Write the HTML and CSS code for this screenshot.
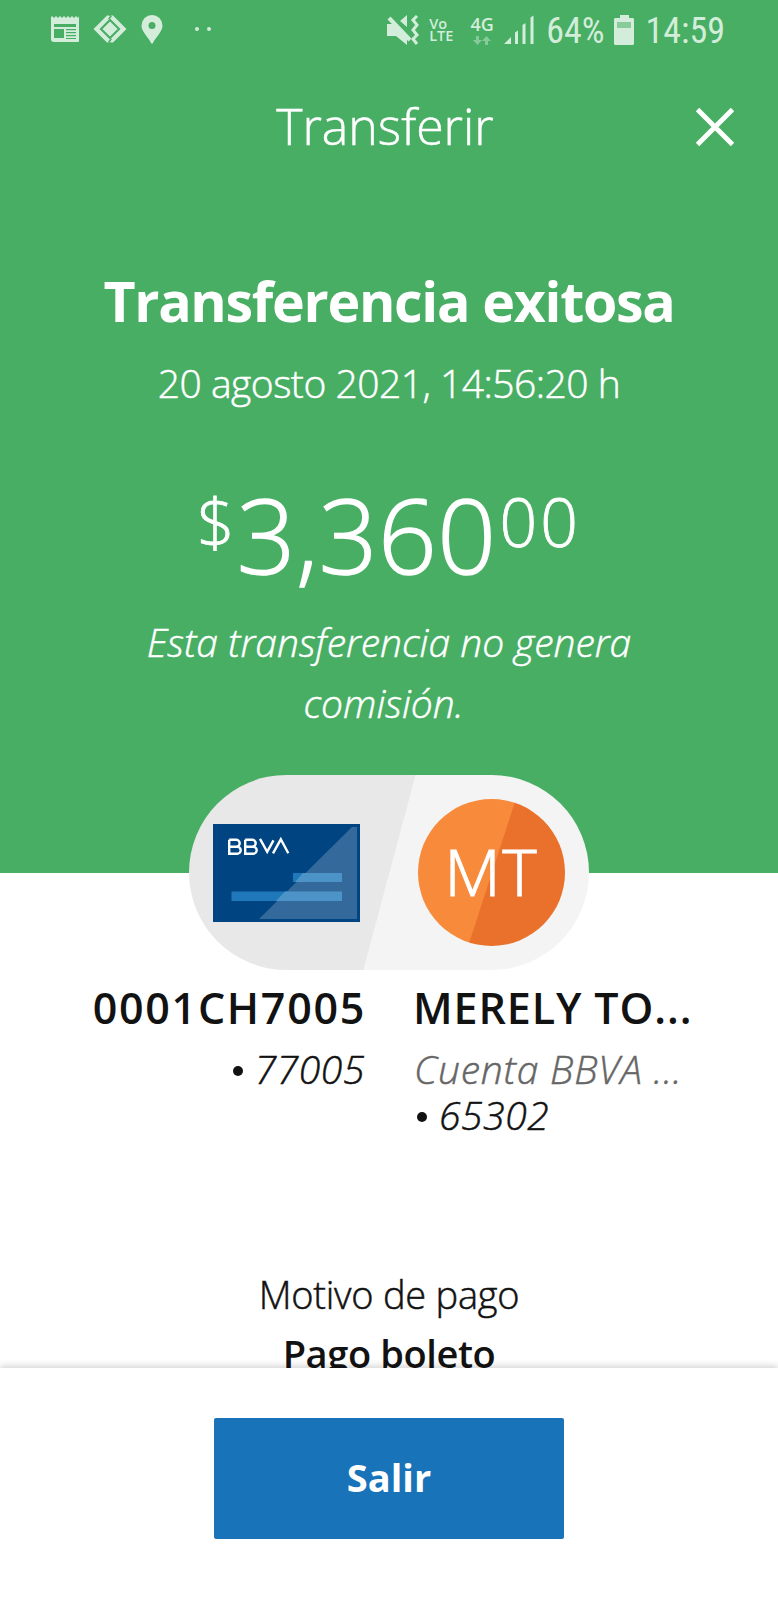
FILE: index.html
```
<!DOCTYPE html>
<html lang="es">
<head>
    <meta charset="UTF-8">
    <meta name="viewport" content="width=device-width, initial-scale=1.0">
    <title>Transferir</title>
    <link rel="stylesheet" href="styles.css">
</head>
<body>
    <div class="screen">
        <header class="hero">
            <div class="status-bar">
                <div class="status-left">
                    <svg width="28" height="28" viewBox="0 0 28 28">
                        <path fill="currentColor" fill-rule="evenodd" d="M0 2l1-1 2 2 2-2 2 2 2-2 2 2 2-2 2 2 2-2 2 2 2-2 2 2 2-2 2 2 1-2 1 1v22q0 3-3 3H3q-3 0-3-3zM3 9v3h22V9zM3 14v9h10v-9zM15 14v1.3h10V14zM15 17v1.3h10V17zM15 20v1.3h10V20zM15 23v1h10v-1z"/>
                    </svg>
                    <svg width="34" height="28" viewBox="0 0 34 28">
                        <path fill="currentColor" d="M14 .5h2l2 2L6.500 14 18 25.500l-2 2h-2L.5 14zM20 .5h-2l-2 2L27.500 14 16 25.500l2 2h2L33.500 14z"/>
                        <path fill="currentColor" stroke="#48ae64" stroke-width="1.300" d="M17 5.500l8.500 8.500-8.500 8.500L8.500 14z"/>
                        <path fill="none" stroke="#48ae64" stroke-width="1.300" d="M18.500 1L15.500 4M15.500 27L18.500 24"/>
                    </svg>
                    <svg width="22" height="29" viewBox="0 0 22 29">
                        <path fill="currentColor" fill-rule="evenodd" d="M11 0a10.500 10.500 0 0 1 10.500 10.500C21.500 17 14 23 12 28q-1 1.500-2 0C8 23 .5 17 .5 10.500A10.500 10.500 0 0 1 11 0zM11 7a3.500 3.500 0 1 0 0 7 3.500 3.500 0 0 0 0-7z"/>
                    </svg>
                    <svg class="more" width="18" height="6" viewBox="0 0 18 6">
                        <circle fill="currentColor" cx="3" cy="3" r="2"/>
                        <circle fill="currentColor" cx="15" cy="3" r="2"/>
                    </svg>
                </div>
                <div class="status-right">
                    <svg width="33" height="30" viewBox="0 0 33 30">
                        <path fill="currentColor" d="M0 9h8L20 20v10l-11-9H0zM13 6l7-6v12z"/>
                        <path stroke="#48ae64" stroke-width="2" d="M5 1l21 23"/>
                        <path stroke="currentColor" stroke-width="4" d="M2 3l21 22"/>
                        <path fill="none" stroke="currentColor" stroke-width="3" d="M30 1l-4 4 4 5-4 5 4 5-4 4 4 5"/>
                    </svg>
                    <div class="volte"><span>Vo</span><span>LTE</span></div>
                    <div class="network">
                        <span>4G</span>
                        <svg width="18" height="9" viewBox="0 0 18 9">
                            <path fill="currentColor" d="M3 0h3v4h3L4.500 9 0 4h3zM12 9h3V5h3l-4.500-5L9 5h3z"/>
                        </svg>
                    </div>
                    <svg class="signal" width="30" height="30" viewBox="0 0 30 30">
                        <path fill="currentColor" d="M0 29l7-7v7zM11 29V17.500l3-2V29zM18.500 29V10l3-2v21zM26.500 29V2.500l3-2V29z"/>
                    </svg>
                    <span class="battery-level">64%</span>
                    <svg class="battery" width="20" height="30" viewBox="0 0 20 30">
                        <path fill="currentColor" d="M6 0h9v3h4l1 1v25l-1 1H1l-1-1V4l1-1h5z"/>
                        <path fill="#8acb9b" d="M3 7h14v6H3z"/>
                    </svg>
                    <span class="clock">14:59</span>
                </div>
            </div>

            <div class="app-bar">
                <span class="app-title">Transferir</span>
                <svg class="close" width="40" height="40" viewBox="0 0 40 40">
                    <path fill="none" stroke="#fff" stroke-width="4.800" d="M2.500 2.500l35 35M37.500 2.500l-35 35"/>
                </svg>
            </div>

            <h1>Transferencia exitosa</h1>
            <p class="date">20 agosto 2021, 14:56:20 h</p>
            <div class="amount">
                <span class="currency">$</span><span class="units">3,360</span><span class="cents">00</span>
            </div>
            <p class="fee">Esta transferencia no genera <span class="last-word">comisión.</span></p>
        </header>

        <main class="details">
            <div class="pill">
                <svg class="card" width="147" height="98" viewBox="0 0 147 98">
                    <path fill="#004481" d="M0 0h147v98H0z"/>
                    <path fill="#1f78b9" d="M80 49h49v9H80zM18.500 67.500H129V77H18.500z"/>
                    <path fill="#336a9b" d="M139 3h5v92H46z"/>
                    <path fill="#4c93c8" d="M90 49h39v9H82zM72 67.500h57V77H63z"/>
                    <g fill="none" stroke="#fff" stroke-width="2.400">
                        <path d="M16.200 15.700v14.100h8a3.500 3.500 0 0 0 0-7h-8M16.200 15.700h7a3.500 3.500 0 0 1 0 7"/>
                        <path d="M32.200 15.700v14.100h8a3.500 3.500 0 0 0 0-7h-8M32.200 15.700h7a3.500 3.500 0 0 1 0 7"/>
                        <path d="M47 14.800l7.200 13 6.300-11.500M60 29.300l7.800-14 7.500 14"/>
                    </g>
                </svg>
                <div class="avatar">MT</div>
            </div>

            <div class="accounts">
                <div class="account from">
                    <strong>0001CH7005</strong>
                    <span class="number"><i></i>77005</span>
                </div>
                <div class="account to">
                    <strong>MERELY TO...</strong>
                    <span class="bank">Cuenta BBVA ...</span>
                    <span class="number"><i></i>65302</span>
                </div>
            </div>

            <div class="reason">
                <span>Motivo de pago</span>
                <strong>Pago boleto</strong>
            </div>
        </main>

        <footer class="footer">
            <button class="exit">Salir</button>
        </footer>
    </div>
</body>
</html>
```
FILE: styles.css
```
* {
    box-sizing: border-box;
}

body {
    margin: 0;
    font-family: "Open Sans", sans-serif;
    color: #121212;
    background: #fff;
}

h1, p {
    margin: 0;
}

svg {
    display: block;
    flex: none;
}

.screen {
    display: flex;
    flex-direction: column;
    height: 1600px;
    overflow: hidden;
}

/* Green header */
.hero {
    flex: none;
    height: 873px;
    background: #48ae64;
    color: #fff;
    text-align: center;
    font-weight: 300;
}

.status-bar {
    display: flex;
    justify-content: space-between;
    height: 60px;
    padding: 0 53px 0 51px;
    color: #d3edda;
}

.status-left,
.status-right {
    display: flex;
    align-items: center;
}

.status-left {
    gap: 14px;
    padding-bottom: 2px;
}

.status-left .more {
    margin-left: 17px;
}

.volte,
.network {
    display: flex;
    flex-direction: column;
    font-weight: 600;
}

.volte {
    width: 25px;
    margin-left: 9px;
    font-size: 14.500px;
    line-height: 12.500px;
    text-align: left;
}

.network {
    align-items: center;
    width: 26px;
    margin-left: 15px;
    font-size: 18px;
    line-height: 17px;
}

.network svg {
    margin-top: 3px;
    opacity: 0.45;
}

.signal {
    margin-left: 9px;
}

.battery-level,
.clock {
    font: 400 36px/60px Roboto, sans-serif;
    font-stretch: 75%;
    padding-top: 1px;
}

.battery-level {
    margin-left: 12px;
}

.battery {
    margin-left: 9px;
    margin-right: 12px;
}

.app-bar {
    display: grid;
    grid-template-columns: 100px 1fr 100px;
    align-items: center;
    height: 130px;
}

.app-title {
    grid-column: 2;
    font-size: 50px;
    line-height: 60px;
    margin: 2px 8px 0 0;
}

.close {
    margin-left: 17px;
    margin-top: 3px;
}

/* Light text, drawn slightly heavier than weight 300 */
.app-title,
.date,
.amount,
.fee,
.avatar,
.number,
.bank,
.reason span {
    -webkit-text-stroke: 0.500px currentColor;
}

h1 {
    margin-top: 71px;
    font-size: 55.500px;
    line-height: 80px;
    font-weight: 700;
    letter-spacing: -1.300px;
}

.date {
    margin-top: 17px;
    font-size: 39px;
    line-height: 50px;
    letter-spacing: -0.500px;
}

.amount {
    display: flex;
    justify-content: center;
    height: 110px;
    margin-top: 71px;
    line-height: 110px;
    -webkit-text-stroke-width: 1.400px;
}

.units {
    font-size: 103px;
    letter-spacing: 0.500px;
}

.currency,
.cents {
    font-size: 66px;
    line-height: 84px;
    -webkit-text-stroke-width: 0.800px;
}

.currency {
    margin-right: 2px;
}

.cents {
    margin-left: 3px;
    letter-spacing: 3px;
}

.fee {
    width: 560px;
    margin: 23px auto 0;
    font-size: 39px;
    line-height: 60.500px;
    font-style: italic;
}

.fee .last-word {
    margin-right: 11px;
}

/* Accounts */
.details {
    flex: 1;
    min-height: 0;
}

.pill {
    display: flex;
    align-items: center;
    justify-content: space-between;
    position: relative;
    width: 400px;
    height: 195px;
    margin: -98px auto 0;
    padding: 0 24px;
    border-radius: 98px;
    background: linear-gradient(105deg, #e8e8e8 50%, #f4f4f4 50.200%);
}

.avatar {
    width: 147px;
    height: 147px;
    border-radius: 50%;
    background: linear-gradient(108deg, #f78b3b 50%, #e9712b 50.500%);
    color: #fff;
    font-size: 65px;
    line-height: 144px;
    font-weight: 300;
    letter-spacing: 2px;
    text-align: center;
    -webkit-text-stroke-width: 1.200px;
}

.accounts {
    display: grid;
    grid-template-columns: 365px 1fr;
    column-gap: 49px;
    height: 290px;
    padding-top: 12px;
    font-size: 39px;
    font-weight: 300;
    font-style: italic;
    line-height: 46px;
}

.account {
    display: flex;
    flex-direction: column;
}

.account strong {
    height: 64px;
    font-size: 43px;
    line-height: 52px;
    font-weight: 600;
    font-style: normal;
}

.from {
    align-items: flex-end;
}

.from strong {
    margin-right: -1px;
    letter-spacing: 1.700px;
}

.to strong {
    margin-left: -1px;
    letter-spacing: 0.900px;
}

.number {
    display: flex;
    align-items: center;
    letter-spacing: 0.600px;
}

.number i {
    width: 10px;
    height: 10px;
    margin: 3px 12px 0 3px;
    border-radius: 50%;
    background: #121212;
}

.bank {
    color: #666;
    letter-spacing: 0.800px;
}

.reason {
    display: flex;
    flex-direction: column;
    align-items: center;
    padding-top: 5px;
    font-size: 38px;
    line-height: 59px;
    font-weight: 300;
}

.reason span {
    letter-spacing: -0.250px;
}

.reason strong {
    font-weight: 600;
    letter-spacing: -0.400px;
}

/* Bottom action */
.footer {
    position: relative;
    flex: none;
    display: flex;
    justify-content: center;
    align-items: flex-start;
    height: 232px;
    padding-top: 50px;
    background: #fff;
    box-shadow: 0 -2px 7px rgba(0, 0, 0, 0.18);
}

.exit {
    width: 350px;
    height: 121px;
    padding: 0 0 4px;
    border: 0;
    border-radius: 2px;
    background: #1973b8;
    color: #fff;
    font: 700 38px "Open Sans", sans-serif;
}
```
